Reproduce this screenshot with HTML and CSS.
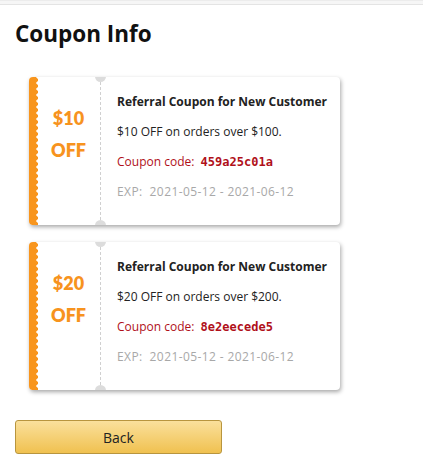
FILE: index.html
```html
<!DOCTYPE html>
<html>
<head>
<meta charset="utf-8">
<link rel="stylesheet" href="styles.css">
</head>
<body>
<div class="topbar"></div>
<main class="page">
  <h1 class="title">Coupon Info</h1>
  <div class="list">
    <div class="coupon">
      <div class="left">
        <div class="amount">$10</div>
        <div class="off">OFF</div>
      </div>
      <div class="right">
        <div class="name">Referral Coupon for New Customer</div>
        <div class="desc">$10 OFF on orders over $100.</div>
        <div class="code">Coupon code:&nbsp; <b>459a25c01a</b></div>
        <div class="exp">EXP:&nbsp; 2021-05-12 - 2021-06-12</div>
      </div>
    </div>
    <div class="coupon">
      <div class="left">
        <div class="amount">$20</div>
        <div class="off">OFF</div>
      </div>
      <div class="right">
        <div class="name">Referral Coupon for New Customer</div>
        <div class="desc">$20 OFF on orders over $200.</div>
        <div class="code">Coupon code:&nbsp; <b>8e2eecede5</b></div>
        <div class="exp">EXP:&nbsp; 2021-05-12 - 2021-06-12</div>
      </div>
    </div>
  </div>
  <button class="back">Back</button>
</main>
</body>
</html>
```
FILE: styles.css
```css
html, body { margin: 0; padding: 0; background: #fff; }
body { font-family: "Open Sans", "Noto Sans", sans-serif; color: #222; }
.topbar { height: 3px; border-top: 1px solid #ececec; border-bottom: 1px solid #e4e4e4; background: #f6f6f6; }
.page { padding: 0 15px; }
.title { margin: 14px 0 0; font-size: 22.5px; font-weight: 700; color: #111; line-height: 30px; letter-spacing: 0; }
.list { display: flex; flex-direction: column; gap: 17px; margin-top: 28px; padding-left: 14px; }
.coupon {
  width: 311px; height: 148px; display: flex; background: #fff;
  border-radius: 4px; box-shadow: 1px 2px 4px rgba(0,0,0,0.35);
  position: relative; overflow: hidden;
}
.left {
  width: 72px; flex: none; position: relative;
  display: flex; flex-direction: column; align-items: center; justify-content: center;
  padding-left: 8px; box-sizing: border-box; padding-bottom: 34px;
  border-right: 1px dashed #d0d0d0;
  background:
    radial-gradient(circle at 6px 3px, #f8951d 2.6px, transparent 3.1px) 0 0 / 10px 6px repeat-y,
    linear-gradient(#f8951d, #f8951d) 0 0 / 6px 100% no-repeat;
}
.left::before, .left::after {
  content: ""; position: absolute; right: -6px; width: 11px; height: 11px; border-radius: 50%; background: #dcdcdc;
}
.left::before { top: -6px; }
.left::after { bottom: -6px; }
.amount, .off { font-family: Lato, sans-serif; font-weight: 800; color: #f7931e; font-size: 18px; line-height: 32px; }
.right { padding: 10px 0 0 16px; font-size: 12px; }
.right > div { line-height: 30px; white-space: nowrap; }
.name { font-weight: 700; color: #222; }
.desc { color: #222; }
.code { color: #b0101a; }
.code b { font-family: "DejaVu Sans Mono", monospace; font-weight: 700; color: #b0101a; font-size: 12px; }
.exp { color: #a8a8a8; letter-spacing: 0.4px; }
.back {
  display: block; margin-top: 30px; width: 207px; height: 34px;
  border: 1px solid #b8953e; border-radius: 3px;
  background: linear-gradient(#fae09c, #f0c150);
  font-family: "Open Sans", sans-serif; font-size: 14px; color: #222; cursor: pointer;
}
```
